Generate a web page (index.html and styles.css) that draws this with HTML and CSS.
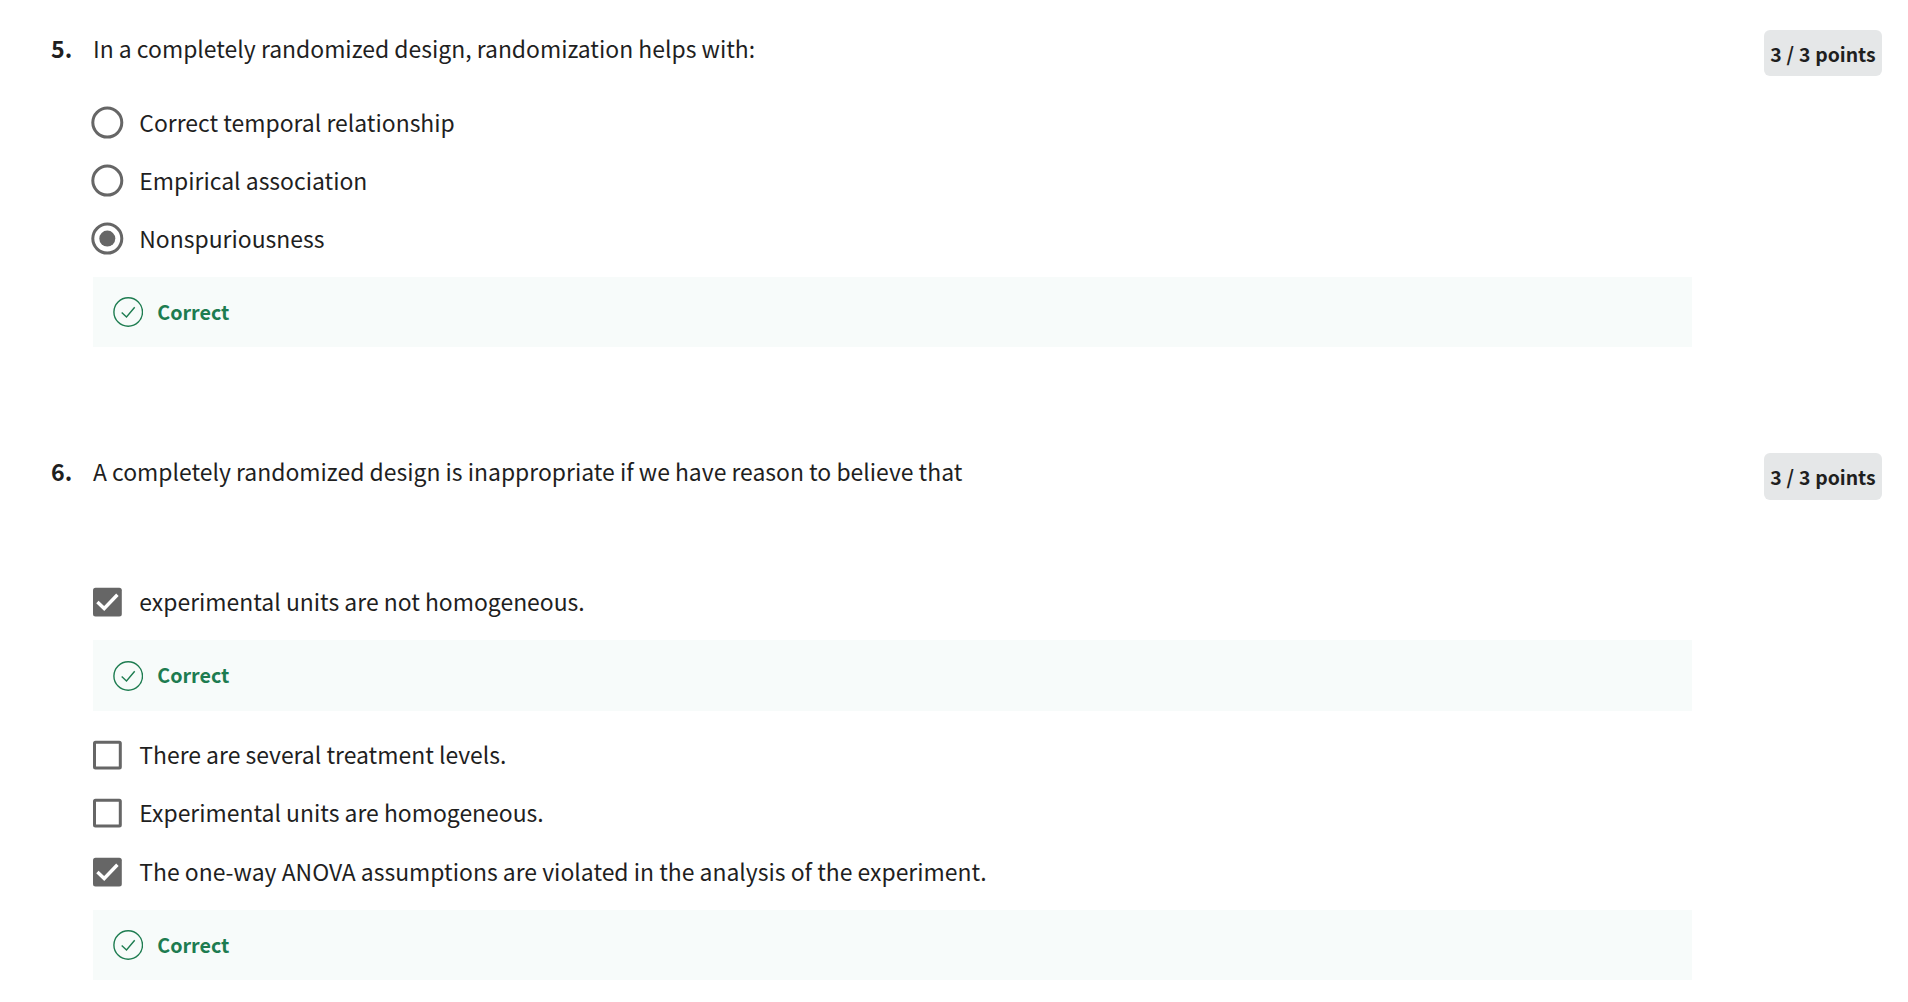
FILE: index.html
```html
<!DOCTYPE html>
<html lang="en">
<head>
<meta charset="utf-8">
<title>Quiz results</title>
<link rel="stylesheet" href="styles.css">
</head>
<body>
<svg class="sprite" aria-hidden="true">
  <symbol id="ok" viewBox="0 0 30 30"><circle cx="15.2" cy="15" r="14.3"/><path d="M8.7 15.5L13.5 20L21.7 10.2"/></symbol>
  <symbol id="radio" viewBox="0 0 34 34"><circle cx="17.3" cy="17.6" r="14.5"/></symbol>
  <symbol id="radio-on" viewBox="0 0 34 34"><circle cx="17.3" cy="17.6" r="14.5"/><circle class="dot" cx="17.3" cy="17.6" r="8"/></symbol>
  <symbol id="box" viewBox="0 0 34 34"><rect x="4.5" y="5.2" width="25.8" height="25.7" rx="1"/></symbol>
  <symbol id="box-on" viewBox="0 0 34 34"><rect class="fill" x="3" y="3.7" width="28.8" height="28.7" rx="2.5"/><path class="tick" d="M7.4 18L14.2 24.5L27.4 10.8"/></symbol>
</svg>
<main class="quiz">
  <section class="question">
    <div class="number">5.</div>
    <div class="body">
      <p class="prompt">In a completely randomized design, randomization helps with:</p>
      <div class="options">
        <label class="option"><svg class="control"><use href="#radio"/></svg><span>Correct temporal relationship</span></label>
        <label class="option"><svg class="control"><use href="#radio"/></svg><span>Empirical association</span></label>
        <label class="option"><svg class="control"><use href="#radio-on"/></svg><span>Nonspuriousness</span></label>
      </div>
      <div class="feedback"><svg class="ok"><use href="#ok"/></svg><span>Correct</span></div>
    </div>
    <div class="points">3 / 3 points</div>
  </section>
  <section class="question second">
    <div class="number">6.</div>
    <div class="body">
      <p class="prompt">A completely randomized design is inappropriate if we have reason to believe that</p>
      <div class="options">
        <label class="option"><svg class="control"><use href="#box-on"/></svg><span>experimental units are not homogeneous.</span></label>
      </div>
      <div class="feedback tall"><svg class="ok"><use href="#ok"/></svg><span>Correct</span></div>
      <div class="options rest">
        <label class="option"><svg class="control"><use href="#box"/></svg><span>There are several treatment levels.</span></label>
        <label class="option"><svg class="control"><use href="#box"/></svg><span>Experimental units are homogeneous.</span></label>
        <label class="option"><svg class="control"><use href="#box-on"/></svg><span>The one-way ANOVA assumptions are violated in the analysis of the experiment.</span></label>
      </div>
      <div class="feedback"><svg class="ok"><use href="#ok"/></svg><span>Correct</span></div>
    </div>
    <div class="points">3 / 3 points</div>
  </section>
</main>
</body>
</html>
```

FILE: styles.css
```css
* { box-sizing: border-box; }
body {
  margin: 0;
  background: #fff;
  color: #1f1f1f;
  font-family: "Noto Sans CJK SC", sans-serif;
  font-size: 22.93px;
}
.sprite { position: absolute; width: 0; height: 0; }
.quiz { padding: 30px 26px 0 51px; }
.question {
  display: grid;
  grid-template-columns: 42px 1599px 190px;
  justify-content: start;
  align-items: start;
}
.number { font-weight: 700; font-size: 23.2px; line-height: 36px; }
.prompt { margin: 0; line-height: 36px; white-space: nowrap; }
.options { padding-top: 27px; }
.option {
  display: flex;
  align-items: center;
  height: 58px;
  gap: 15.3px;
  margin-left: -3px;
  white-space: nowrap;
}
.control {
  width: 34px;
  height: 34px;
  fill: none;
  stroke: #666;
  stroke-width: 3;
}
.dot, .fill { fill: #666; stroke: none; }
.tick { stroke: #fff; stroke-width: 3.4; }
.feedback {
  display: flex;
  align-items: center;
  gap: 14.3px;
  height: 70px;
  margin-top: 10px;
  padding-left: 20px;
  background: #f7fbfa;
  color: #1d7c50;
  font-size: 19.7px;
  font-weight: 700;
}
.feedback span { margin-top: -2px; }
.ok {
  width: 30px;
  height: 30px;
  fill: none;
  stroke: #1d7c50;
  stroke-width: 1.4;
}
.points {
  height: 46px;
  margin-left: 72px;
  padding-top: 1px;
  border-radius: 6px;
  background: #e5e7e8;
  font-size: 19.4px;
  font-weight: 700;
  line-height: 46px;
  text-align: center;
  word-spacing: 0.4px;
}
.second { margin-top: 106px; }
.second .options { padding-top: 83px; }
.second .points { height: 47px; }
.second .rest { padding-top: 14px; }
.feedback.tall { height: 71px; }
.rest .option:last-child { margin-top: 1px; }
```
